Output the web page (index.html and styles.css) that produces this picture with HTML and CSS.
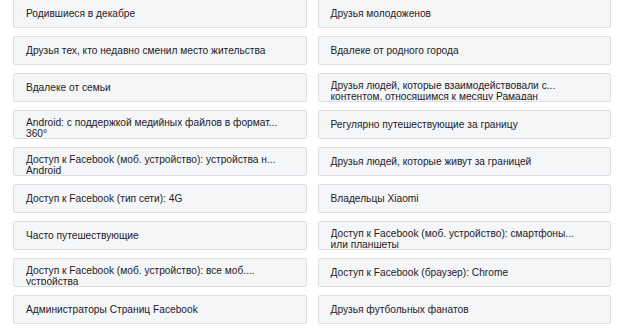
FILE: index.html
```html
<!DOCTYPE html>
<html lang="ru">
<head>
<meta charset="utf-8">
<link rel="stylesheet" href="styles.css">
</head>
<body>
<div class="grid">
  <div class="item"><span class="label">Родившиеся в декабре</span></div>
  <div class="item"><span class="label">Друзья молодоженов</span></div>
  <div class="item"><span class="label">Друзья тех, кто недавно сменил место жительства</span></div>
  <div class="item"><span class="label">Вдалеке от родного города</span></div>
  <div class="item"><span class="label">Вдалеке от семьи</span></div>
  <div class="item two"><div class="clip"><span class="line">Друзья людей, которые взаимодействовали с...</span><span class="line">контентом, относящимся к месяцу Рамадан</span></div></div>
  <div class="item two"><div class="clip"><span class="line">Android: с поддержкой медийных файлов в формат...</span><span class="line">360°</span></div></div>
  <div class="item"><span class="label">Регулярно путешествующие за границу</span></div>
  <div class="item two"><div class="clip"><span class="line">Доступ к Facebook (моб. устройство): устройства н...</span><span class="line">Android</span></div></div>
  <div class="item"><span class="label">Друзья людей, которые живут за границей</span></div>
  <div class="item"><span class="label">Доступ к Facebook (тип сети): 4G</span></div>
  <div class="item"><span class="label">Владельцы Xiaomi</span></div>
  <div class="item"><span class="label">Часто путешествующие</span></div>
  <div class="item two"><div class="clip"><span class="line">Доступ к Facebook (моб. устройство): смартфоны...</span><span class="line">или планшеты</span></div></div>
  <div class="item two"><div class="clip"><span class="line">Доступ к Facebook (моб. устройство): все моб....</span><span class="line">устройства</span></div></div>
  <div class="item"><span class="label">Доступ к Facebook (браузер): Chrome</span></div>
  <div class="item"><span class="label">Администраторы Страниц Facebook</span></div>
  <div class="item"><span class="label">Друзья футбольных фанатов</span></div>
</div>
</body>
</html>
```
FILE: styles.css
```css
html, body {
  margin: 0;
  padding: 0;
  background: #ffffff;
}
body {
  font-family: "Liberation Sans", Arial, sans-serif;
  font-size: 10.2px;
  color: #1d2129;
}
.grid {
  display: grid;
  grid-template-columns: 1fr 1fr;
  column-gap: 11px;
  row-gap: 8px;
  padding: 0 9px 0 13px;
  margin-top: -1px;
}
.item {
  box-sizing: border-box;
  height: 29px;
  border: 1px solid #dddfe2;
  border-radius: 2px;
  background: #f5f6f7;
  padding: 0 12px;
  overflow: hidden;
  display: flex;
  align-items: center;
  white-space: nowrap;
}
.label {
  line-height: 12px;
  padding-top: 1px;
}
.item.two {
  align-items: flex-start;
  padding-top: 6px;
}
.clip {
  height: 20px;
  overflow: hidden;
}
.line {
  display: block;
  line-height: 11px;
}
```
